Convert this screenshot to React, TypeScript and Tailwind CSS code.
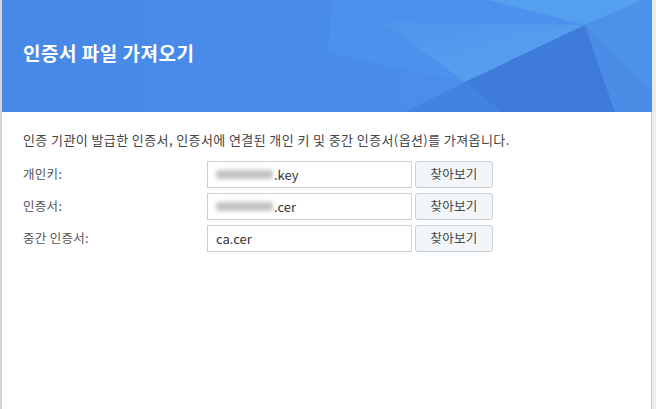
import React from "react";

const font = { fontFamily: '"Noto Sans CJK KR", "Noto Sans", sans-serif' };

function Header() {
  return (
    <div className="relative h-[112px] bg-[#4a8ae9] overflow-hidden">
      <svg className="absolute inset-0" width="650" height="112" viewBox="0 0 650 112" preserveAspectRatio="none">
        <defs>
          <linearGradient id="base" x1="0" y1="0" x2="1" y2="0">
            <stop offset="0" stopColor="#4889e8" />
            <stop offset="0.55" stopColor="#4a8cea" />
            <stop offset="1" stopColor="#4b90ea" />
          </linearGradient>
          <linearGradient id="light" x1="0" y1="0" x2="1" y2="1">
            <stop offset="0" stopColor="#4e95ec" />
            <stop offset="1" stopColor="#5aa6f1" />
          </linearGradient>
        </defs>
        <rect width="650" height="112" fill="url(#base)" />
        <polygon points="330,0 486,0 583,25 463,82 326,53" fill="#4c91eb" />
        <polygon points="486,0 641,0 583,25" fill="#54a0ef" />
        <polygon points="380,22 583,25 463,82" fill="url(#light)" opacity="0.9" />
        <polygon points="583,25 463,82 499,112 613,112" fill="#3f7cda" />
        <polygon points="463,82 403,112 499,112" fill="#4383e0" />
        <polygon points="583,25 613,112 650,112 650,90" fill="#4a8ce6" />
        <polygon points="583,25 641,0 650,0 650,90" fill="#4d92ea" />
      </svg>
      <div className="relative pl-[21px] pt-[40px] text-[19px] font-bold text-white leading-[26px] tracking-[0.5px]" style={font}>
        인증서 파일 가져오기
      </div>
    </div>
  );
}

function Row({ label, value, blurred }: { label: string; value: string; blurred?: boolean }) {
  return (
    <div className="flex items-center h-[27px]">
      <div className="w-[184px] text-[12.5px] text-[#555] tracking-[0.3px]">{label}</div>
      <div className="w-[205px] h-[27px] border border-[#cfcfcf] bg-white flex items-center pl-[8px] text-[13px] text-[#333]">
        {blurred && (
          <span className="inline-block w-[57px] h-[9px] bg-[#c2c2c2] rounded-[3px] blur-[2px] mr-[1px]" />
        )}
        <span>{value}</span>
      </div>
      <div className="ml-[3px] w-[78px] h-[27px] border border-[#c9d0d8] rounded-[3px] bg-[#f3f6f9] flex items-center justify-center text-[12.5px] text-[#444] tracking-[0.3px]">
        찾아보기
      </div>
    </div>
  );
}

export default function App() {
  return (
    <div className="w-[656px] h-[409px] flex bg-white overflow-hidden" style={font}>
      <div className="w-[2px] h-full bg-[#d4d4d4]" />
      <div className="w-[650px] h-full flex flex-col">
        <Header />
        <div className="flex-1 border-r border-[#c9c9c9] pl-[21px] pt-[19px]">
          <div className="text-[13px] text-[#444] leading-[18px] tracking-[0.4px]">
            인증 기관이 발급한 인증서, 인증서에 연결된 개인 키 및 중간 인증서(옵션)를 가져옵니다.
          </div>
          <div className="mt-[12px] flex flex-col gap-[5px]">
            <Row label="개인키:" value=".key" blurred />
            <Row label="인증서:" value=".cer" blurred />
            <Row label="중간 인증서:" value="ca.cer" />
          </div>
        </div>
      </div>
      <div className="w-[4px] h-full bg-[#ececec]" />
    </div>
  );
}
